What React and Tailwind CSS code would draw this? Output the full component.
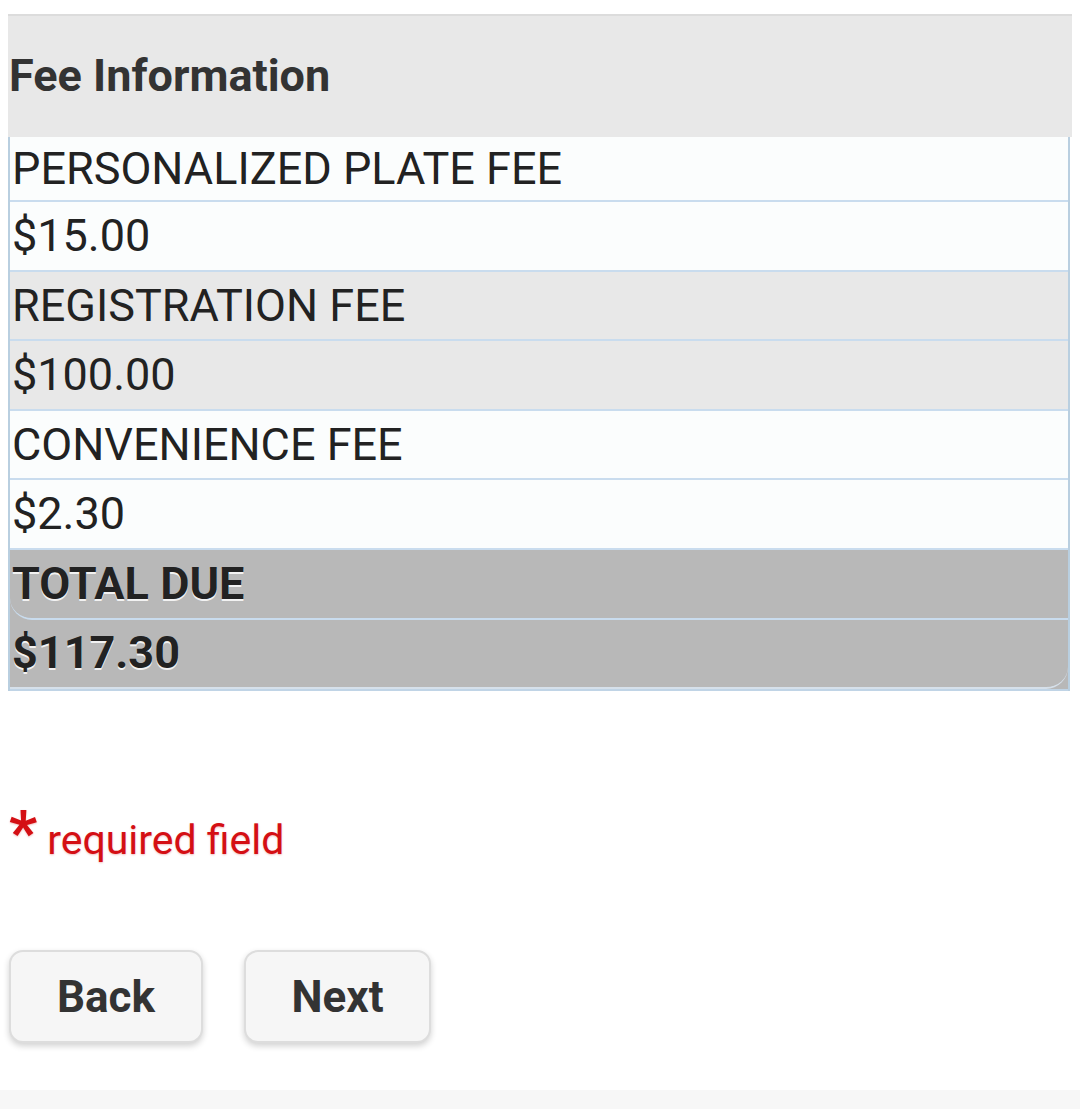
const rows = [
  { label: "PERSONALIZED PLATE FEE", amount: "$15.00", bg: "bg-[#fbfdfd]", first: true },
  { label: "REGISTRATION FEE", amount: "$100.00", bg: "bg-[#e8e8e8]" },
  { label: "CONVENIENCE FEE", amount: "$2.30", bg: "bg-[#fbfdfd]" },
];

const FeeRow = ({ label, amount, bg, first }) => (
  <>
    <div className={`${bg} ${first ? "h-[65px]" : "h-[69.5px]"} flex items-center pl-[2px] border-b-2 border-[#c9dcee] text-[45px] text-[#222]`}>
      {label}
    </div>
    <div className={`${bg} h-[69.5px] flex items-center pl-[2px] border-b-2 border-[#c9dcee] text-[45px] text-[#222]`}>
      {amount}
    </div>
  </>
);

const App = () => {
  return (
    <div className="w-[1080px] h-[1109px] bg-white flex flex-col font-['Roboto',sans-serif] overflow-hidden">
      <div className="pt-[14px] px-[8px]">
        {/* Header */}
        <div className="bg-[#e8e8e8] border-t-2 border-[#dcdcdc] h-[123px] flex items-center pl-[1px]">
          <h2 className="text-[45px] font-bold text-[#333] -mt-[2px]">Fee Information</h2>
        </div>

        {/* Fee table */}
        <div className="border-l-2 border-r-2 border-[#b9cfe0] mr-[2px]">
          {rows.map((r) => (
            <FeeRow key={r.label} {...r} />
          ))}
          <div className="bg-[#b8b8b8] border-t-2 border-[#c9dcee] -mt-[2px]">
            <div className="h-[70px] flex items-center pl-[2px] border-b-2 border-[#c9dcee] rounded-bl-[22px] text-[45px] font-bold text-[#222] [text-shadow:0_2px_0_#f2f2f2]">
              TOTAL DUE
            </div>
          </div>
          <div className="bg-[#b8b8b8] border-b-2 border-[#c0d4e6]">
            <div className="h-[69px] flex items-center pl-[2px] border-b-2 border-[#d6e0ea] rounded-br-[22px] text-[45px] font-bold text-[#222] [text-shadow:0_2px_0_#f2f2f2]">
              $117.30
            </div>
          </div>
        </div>
      </div>

      {/* Required note */}
      <div className="mt-[113px] pl-[9px] flex items-start text-[#d40f14] [text-shadow:0_1px_2px_rgba(200,0,0,0.25)]">
        <span className="text-[62px] leading-none font-bold mt-[-2px]">*</span>
        <span className="text-[41px] ml-[10px] mt-[6px]">required field</span>
      </div>

      {/* Buttons */}
      <div className="mt-[79px] pl-[9px] flex gap-[41px]">
        <button className="w-[194px] h-[93px] rounded-[14px] bg-[#f6f6f6] border-2 border-[#dddddd] shadow-[0_3px_6px_rgba(0,0,0,0.18)] text-[44px] font-bold text-[#333]">
          Back
        </button>
        <button className="w-[187px] h-[93px] rounded-[14px] bg-[#f6f6f6] border-2 border-[#dddddd] shadow-[0_3px_6px_rgba(0,0,0,0.18)] text-[44px] font-bold text-[#333]">
          Next
        </button>
      </div>

      <div className="mt-auto h-[19px] bg-[#f7f7f7]" />
    </div>
  );
};

export default App;
